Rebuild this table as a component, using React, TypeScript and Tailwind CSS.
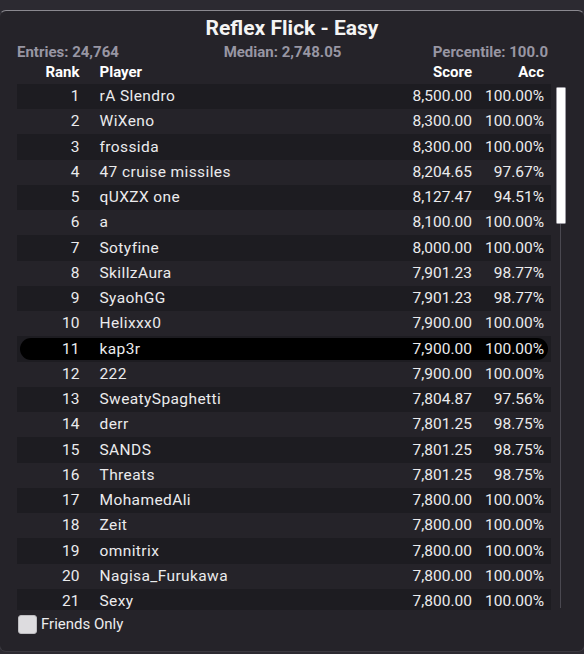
import React from 'react';

type Entry = { rank: number; name: string; score: string; acc: string };

const ENTRIES: Entry[] = [
  { rank: 1, name: 'rA Slendro', score: '8,500.00', acc: '100.00%' },
  { rank: 2, name: 'WiXeno', score: '8,300.00', acc: '100.00%' },
  { rank: 3, name: 'frossida', score: '8,300.00', acc: '100.00%' },
  { rank: 4, name: '47 cruise missiles', score: '8,204.65', acc: '97.67%' },
  { rank: 5, name: 'qUXZX one', score: '8,127.47', acc: '94.51%' },
  { rank: 6, name: 'a', score: '8,100.00', acc: '100.00%' },
  { rank: 7, name: 'Sotyfine', score: '8,000.00', acc: '100.00%' },
  { rank: 8, name: 'SkillzAura', score: '7,901.23', acc: '98.77%' },
  { rank: 9, name: 'SyaohGG', score: '7,901.23', acc: '98.77%' },
  { rank: 10, name: 'Helixxx0', score: '7,900.00', acc: '100.00%' },
  { rank: 11, name: 'kap3r', score: '7,900.00', acc: '100.00%' },
  { rank: 12, name: '222', score: '7,900.00', acc: '100.00%' },
  { rank: 13, name: 'SweatySpaghetti', score: '7,804.87', acc: '97.56%' },
  { rank: 14, name: 'derr', score: '7,801.25', acc: '98.75%' },
  { rank: 15, name: 'SANDS', score: '7,801.25', acc: '98.75%' },
  { rank: 16, name: 'Threats', score: '7,801.25', acc: '98.75%' },
  { rank: 17, name: 'MohamedAli', score: '7,800.00', acc: '100.00%' },
  { rank: 18, name: 'Zeit', score: '7,800.00', acc: '100.00%' },
  { rank: 19, name: 'omnitrix', score: '7,800.00', acc: '100.00%' },
  { rank: 20, name: 'Nagisa_Furukawa', score: '7,800.00', acc: '100.00%' },
  { rank: 21, name: 'Sexy', score: '7,800.00', acc: '100.00%' },
];

const ME = 11;

const App: React.FC = () => {
  return (
    <div className="w-[584px] h-[654px] overflow-hidden bg-[#2c2a31] pt-[10px]">
      <div className="-ml-px w-[586px] h-[642px] rounded-[7px] border border-[#3a383f] border-t-[#8a888f] bg-[#252329] pt-[5px] text-white">
        {/* Title + stats */}
        <h1 className="h-[24px] text-center text-[21px] leading-[24px] font-bold font-['Roboto',sans-serif] text-[#f4f4f4]">
          Reflex Flick - Easy
        </h1>
        <div className="mt-[1.6px] grid h-[20px] grid-cols-3 pl-[17px] pr-[36px] text-[15px] leading-[20px] font-bold font-['Roboto',sans-serif] text-[#9896a3]">
          <span>Entries: 24,764</span>
          <span className="text-center">Median: 2,748.05</span>
          <span className="text-right">Percentile: 100.0</span>
        </div>

        {/* Column headers */}
        <div className="ml-[17px] flex h-[20px] w-[533.5px] text-[15px] leading-[20px] font-bold font-['Roboto',sans-serif] text-white">
          <span className="w-[62.5px] text-right">Rank</span>
          <span className="ml-[20px] flex-1">Player</span>
          <span className="text-right">Score</span>
          <span className="w-[72px] text-right">Acc</span>
          <span className="w-[6.5px]" />
        </div>

        {/* List + scrollbar */}
        <div className="mt-[2.4px] flex h-[526px]">
          <div className="ml-[17px] w-[533.5px] overflow-hidden font-['Roboto',sans-serif] text-[15.5px] text-[#ebebed]">
            {ENTRIES.map((e) =>
              e.rank === ME ? (
                <div key={e.rank} className="h-[25.25px] bg-[#1d1c21] px-[3px] py-[1.5px]">
                  <div className="flex h-full items-center rounded-full bg-black leading-[22px]">
                    <span className="w-[59.5px] text-right">{e.rank}</span>
                    <span className="ml-[20px] flex-1 whitespace-nowrap tracking-[0.4px]">{e.name}</span>
                    <span className="text-right">{e.score}</span>
                    <span className="w-[72px] text-right">{e.acc}</span>
                    <span className="w-[3.5px]" />
                  </div>
                </div>
              ) : (
                <div
                  key={e.rank}
                  className={`flex h-[25.25px] items-center leading-[25px] ${e.rank % 2 === 1 ? 'bg-[#1d1c21]' : ''}`}
                >
                  <span className="w-[62.5px] text-right">{e.rank}</span>
                  <span className="ml-[20px] flex-1 whitespace-nowrap tracking-[0.4px]">{e.name}</span>
                  <span className="text-right">{e.score}</span>
                  <span className="w-[72px] text-right">{e.acc}</span>
                  <span className="w-[6.5px]" />
                </div>
              )
            )}
          </div>
          <div className="ml-[5.5px] flex w-[9.5px] flex-col items-center">
            <div className="mt-[3px] h-[137px] w-[9.5px] rounded-[1.5px] border border-[#9c9aa2] bg-white" />
            <div className="h-[384px] w-px bg-[#4a4850]" />
          </div>
        </div>

        {/* Friends toggle */}
        <label className="mt-[5px] ml-[18px] flex h-[19px] items-center gap-[4px] font-['Roboto',sans-serif] text-[15px] leading-[19px] text-[#ececee]">
          <span className="h-[19px] w-[19px] rounded-[3px] border border-[#bdbcc0] bg-[#dddcdf]" />
          <span>Friends Only</span>
        </label>
      </div>
    </div>
  );
};

export default App;
